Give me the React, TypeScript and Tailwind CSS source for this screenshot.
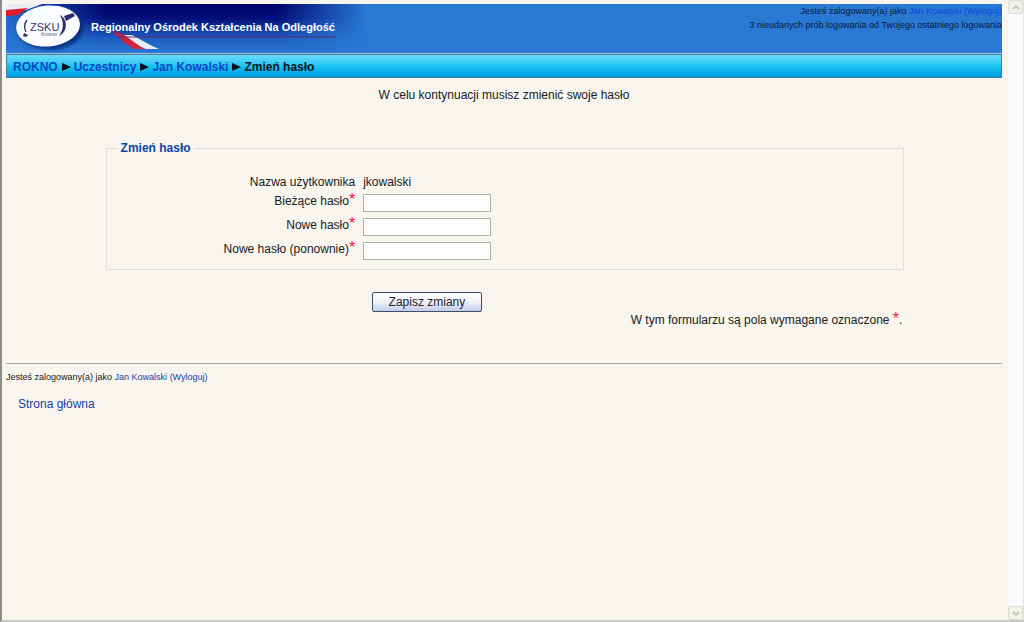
import { useState } from 'react'

const passwordFields = [
  { id: 'password', label: 'Bieżące hasło' },
  { id: 'newpassword1', label: 'Nowe hasło' },
  { id: 'newpassword2', label: 'Nowe hasło (ponownie)' },
]

const breadcrumbs = ['ROKNO', 'Uczestnicy', 'Jan Kowalski']

function Required() {
  return (
    <span className="text-base leading-[0] text-[#f0202c]" aria-label="wymagane">
      *
    </span>
  )
}

function LoginInfo({ linkClass }: { linkClass: string }) {
  return (
    <p>
      Jesteś zalogowany(a) jako{' '}
      <a href="#profile" className={linkClass}>
        Jan Kowalski
      </a>{' '}
      <a href="#logout" className={linkClass}>
        (Wyloguj)
      </a>
    </p>
  )
}

function Banner() {
  return (
    <svg width="360" height="49" viewBox="0 0 360 49" role="img" aria-label="Regionalny Ośrodek Kształcenia Na Odległość">
      <defs>
        <linearGradient id="sky" x1="0" y1="0" x2="0" y2="1">
          <stop offset="0" stopColor="#00006c" />
          <stop offset="0.3" stopColor="#03107c" />
          <stop offset="0.7" stopColor="#1d5dbd" />
          <stop offset="1" stopColor="#2878d4" />
        </linearGradient>
        <linearGradient id="fade" x1="0" y1="0" x2="1" y2="0">
          <stop offset="0" stopColor="#2878d4" stopOpacity="0.85" />
          <stop offset="0.28" stopColor="#2878d4" stopOpacity="0" />
          <stop offset="0.75" stopColor="#2878d4" stopOpacity="0" />
          <stop offset="1" stopColor="#2878d4" />
        </linearGradient>
        <linearGradient id="red" x1="0" y1="0" x2="1" y2="1">
          <stop offset="0" stopColor="#d81c34" stopOpacity="0.5" />
          <stop offset="0.5" stopColor="#d81c34" />
          <stop offset="1" stopColor="#c8324c" />
        </linearGradient>
        <filter id="soft">
          <feGaussianBlur stdDeviation="1.5" />
        </filter>
      </defs>
      <rect width="360" height="49" fill="url(#sky)" />
      <rect width="360" height="49" fill="url(#fade)" />
      <path d="M0 0H36L20 6 0 7Z" fill="#e8edf6" />
      <path d="M0 6 22 4 12 11 0 12Z" fill="#e01c2c" />
      <path d="M104 26 120 31C126 36 134 42 140 45H128C119 40 112 33 104 26Z" fill="url(#red)" />
      <path d="M118 31H126C134 35 143 41 153 45H140C132 42 126 36 118 31Z" fill="#e3edf9" />
      <path d="M112 33H330" stroke="#5c2870" fill="none" />
      <ellipse cx="44" cy="25" rx="33" ry="21" fill="#062069" filter="url(#soft)" opacity="0.7" />
      <ellipse cx="42" cy="22" rx="32" ry="20.5" fill="#fbfcff" transform="rotate(-5 42 22)" />
      <path d="M21 16C18 20 18 24 20 28" stroke="#292c70" fill="none" strokeWidth="1.3" />
      <path d="m18 29 4 2-2 2-3-1Z" fill="#292c70" />
      <path d="M54 11C62 15 62 28 53 32C58 25 58 18 54 11Z" fill="#292c70" />
      <path d="m58 12 9-3 2 3-9 5Z" fill="#292c70" />
      <text x="24" y="27" fill="#35356c" fontSize="11" className="font-[Liberation_Sans,sans-serif]">
        ZSKU
      </text>
      <text x="35" y="32" fill="#55557c" fontSize="5" className="font-[Liberation_Sans,sans-serif]">
        Krosno
      </text>
      <text x="85" y="27" fill="#fff" fontSize="11" fontWeight="700" className="font-[Liberation_Sans,sans-serif]">
        Regionalny Ośrodek Kształcenia Na Odległość
      </text>
    </svg>
  )
}

function Breadcrumbs() {
  return (
    <nav
      className="flex h-6 items-center border border-[#427c98] bg-linear-to-b from-[#68dcfc] via-[#18c4f4] to-[#009ce4] px-1.5 pt-0.5 text-xs font-bold"
      aria-label="Ścieżka">
      <ol className="flex items-center gap-[3px]">
        {breadcrumbs.map((crumb) => (
          <li key={crumb} className="flex items-center gap-[3px]">
            <a href="#crumb" className="text-[#0847c4]">
              {crumb}
            </a>
            <svg className="h-2 w-2.5" viewBox="0 0 10 8" aria-hidden="true">
              <path d="M1 0 10 4 1 8Z" fill="#061018" />
            </svg>
          </li>
        ))}
        <li className="text-[#08141c]">Zmień hasło</li>
      </ol>
    </nav>
  )
}

function Scrollbar() {
  return (
    <div className="flex w-4 shrink-0 flex-col justify-between border-r border-[#e4e4e0] bg-[#fbfbfd]">
      <button type="button" aria-label="W górę" className="flex h-3.5 items-center justify-center rounded-xs border border-[#dcdcd4] bg-[#f3f2ea]">
        <svg width="8" height="5" viewBox="0 0 8 5">
          <path d="m1 4 3-3 3 3" fill="none" stroke="#b8b8b0" strokeWidth="1.5" />
        </svg>
      </button>
      <button type="button" aria-label="W dół" className="flex h-3.5 items-center justify-center rounded-xs border border-[#dcdcd4] bg-[#f3f2ea]">
        <svg width="8" height="5" viewBox="0 0 8 5">
          <path d="m1 1 3 3 3-3" fill="none" stroke="#b8b8b0" strokeWidth="1.5" />
        </svg>
      </button>
    </div>
  )
}

export default function App() {
  const [values, setValues] = useState<Record<string, string>>({})

  return (
    <div className="flex min-h-screen border-b-2 border-l-2 border-b-[#c8c8c8] border-l-[#8c8c8c] bg-[#f7f5ee] font-[Liberation_Sans,Arial,sans-serif] text-xs text-[#202020]">
      <div className="min-w-0 flex-1 pt-1 pr-1.5 pl-1">
        <header className="flex justify-between bg-[#2878d4]">
          <Banner />
          <div className="text-right text-[9px] leading-3.5 text-[#081838]">
            <LoginInfo linkClass="text-[#1048d8]" />
            <p>3 nieudanych prób logowania od Twojego ostatniego logowania</p>
          </div>
        </header>
        <div className="h-px bg-[#a8c4dc]" />
        <Breadcrumbs />

        <main>
          <p className="pt-[9px] text-center leading-4">W celu kontynuacji musisz zmienić swoje hasło</p>

          <form className="mt-[37px] mr-[9.8%] ml-[10%]" onSubmit={(e) => e.preventDefault()}>
            <fieldset className="border border-[#dcdedc] pb-[9px]">
              <legend className="ml-2.5 px-1 text-xs leading-4 font-bold text-[#0c44ac]">Zmień hasło</legend>
              <div className="mt-[18px] flex gap-2 leading-4">
                <span className="w-[31.2%] text-right">Nazwa użytkownika</span>
                <span>jkowalski</span>
              </div>
              <div className="mt-1 flex flex-col gap-1.5">
                {passwordFields.map(({ id, label }) => (
                  <div key={id} className="flex gap-2">
                    <label htmlFor={id} className="h-[18px] w-[31.2%] text-right leading-3.5">
                      {label}
                      <Required />
                    </label>
                    <input
                      id={id}
                      type="password"
                      value={values[id] ?? ''}
                      onChange={(e) => setValues({ ...values, [id]: e.target.value })}
                      className="h-[18px] w-32 border border-[#b0b0ac] bg-white px-1"
                    />
                  </div>
                ))}
              </div>
            </fieldset>

            <div className="mt-[22px] flex pl-[33.3%]">
              <button
                type="submit"
                className="h-5 rounded-xs border border-[#3c506c] bg-linear-to-b from-white via-[#f0f2fc] to-[#c4cae8] px-4 leading-4">
                Zapisz zmiany
              </button>
            </div>
            <p className="pr-0.5 text-right leading-4">
              W tym formularzu są pola wymagane oznaczone <Required />.
            </p>
          </form>
        </main>

        <footer className="mt-[35px] border-t border-[#a4a4a0] pt-[7px]">
          <div className="text-[9px] leading-3">
            <LoginInfo linkClass="text-[#1840a8]" />
          </div>
          <a href="#home" className="mt-[13px] ml-3 inline-block leading-4 text-[#1840a8]">
            Strona główna
          </a>
        </footer>
      </div>
      <Scrollbar />
    </div>
  )
}
